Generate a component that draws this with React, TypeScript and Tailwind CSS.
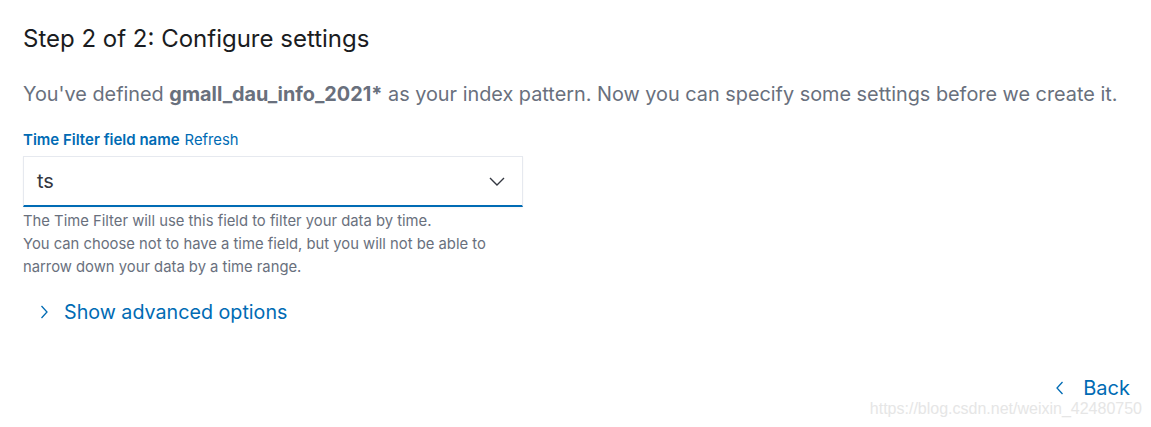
export default function App() {
  return (
    <div className="relative h-[427px] w-[1151px] overflow-hidden bg-white font-['Inter',sans-serif]">
      <div className="flex flex-col px-[23px] pt-[22px]">
        {/* Header */}
        <h2 className="text-[24px] leading-[34px] font-normal text-[#1a1c21]">
          Step 2 of 2: Configure settings
        </h2>

        <p className="mt-[24px] text-[19.85px] leading-[28px] text-[#69707d]">
          You've defined <strong className="font-bold">gmall_dau_info_2021*</strong> as your index
          pattern. Now you can specify some settings before we create it.
        </p>

        {/* Time field */}
        <div className="mt-[22px] flex items-baseline gap-[5px]">
          <span className="text-[15px] leading-[20px] font-semibold text-[#006bb4]">
            Time Filter field name
          </span>
          <button className="text-[14.8px] leading-[20px] text-[#006bb4]">Refresh</button>
        </div>

        <div className="mt-[6px] flex h-[51px] w-[500px] shrink-0 items-center justify-between border border-[#e6e9ef] border-b-2 border-b-[#006bb4] bg-white pl-[13px] pr-[17px] shadow-[0_1px_2px_rgba(0,0,0,0.04)]">
          <span className="text-[20px] leading-[28px] text-[#343741]">ts</span>
          <svg width="16" height="9" viewBox="0 0 16 9" fill="none" className="text-[#343741]">
            <polyline points="1,1 8,8 15,1" stroke="currentColor" strokeWidth="1.4" />
          </svg>
        </div>

        <div className="mt-[3px] text-[14.8px] leading-[23px] text-[#69707d]">
          <div>The Time Filter will use this field to filter your data by time.</div>
          <div>You can choose not to have a time field, but you will not be able to</div>
          <div>narrow down your data by a time range.</div>
        </div>

        <button className="mt-[19px] flex items-center gap-[16px] pl-[17px] text-[19.7px] leading-[28px] text-[#006bb4]">
          <svg width="8" height="14" viewBox="0 0 8 14" fill="none">
            <polyline points="1.5,1 7,7 1.5,13" stroke="currentColor" strokeWidth="1.3" />
          </svg>
          Show advanced options
        </button>

        <div className="mt-[48px] -mr-[2px] flex justify-end">
          <button className="flex items-center gap-[19px] text-[20px] leading-[28px] text-[#006bb4]">
            <svg width="8" height="14" viewBox="0 0 8 14" fill="none">
              <polyline points="6.5,1 1,7 6.5,13" stroke="currentColor" strokeWidth="1.3" />
            </svg>
            Back
          </button>
        </div>
      </div>

      {/* watermark */}
      <div className="absolute right-[9px] top-[399px] font-['Liberation_Sans',sans-serif] text-[16px] leading-[20px] text-[#e6e6e6]">
        https://blog.csdn.net/weixin_42480750
      </div>
    </div>
  );
}
